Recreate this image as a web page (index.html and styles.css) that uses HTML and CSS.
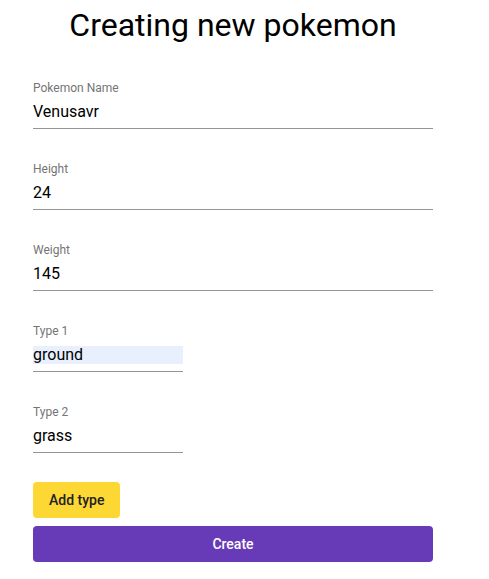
FILE: index.html
```html
<!DOCTYPE html>
<html>
<head>
<meta charset="utf-8">
<link rel="stylesheet" href="styles.css">
</head>
<body>
<div class="page">
  <h1 class="title">Creating new pokemon</h1>
  <form class="form">
    <div class="field">
      <label class="label">Pokemon Name</label>
      <div class="control"><input class="input" value="Venusavr"></div>
    </div>
    <div class="field">
      <label class="label">Height</label>
      <div class="control"><input class="input" value="24"></div>
    </div>
    <div class="field">
      <label class="label">Weight</label>
      <div class="control"><input class="input" value="145"></div>
    </div>
    <div class="field field-short">
      <label class="label">Type 1</label>
      <div class="control"><input class="input input-autofill" value="ground"></div>
    </div>
    <div class="field field-short">
      <label class="label">Type 2</label>
      <div class="control"><input class="input" value="grass"></div>
    </div>
    <div class="actions">
      <button type="button" class="btn btn-add">Add type</button>
      <button type="button" class="btn btn-create">Create</button>
    </div>
  </form>
</div>
</body>
</html>
```
FILE: styles.css
```css
html, body {
  margin: 0;
  padding: 0;
  background: #ffffff;
}
body {
  font-family: Roboto, "Noto Sans", sans-serif;
  color: #000;
}
.page {
  width: 400px;
  padding-left: 33px;
}
.title {
  margin: 0;
  padding-top: 7px;
  font-size: 32px;
  font-weight: 400;
  line-height: 37.5px;
  text-align: center;
  color: #000;
}
.form {
  display: flex;
  flex-direction: column;
  padding-top: 36px;
}
.field {
  display: flex;
  flex-direction: column;
  margin-bottom: 33px;
}
.field-short {
  width: 150px;
}
.label {
  font-size: 12px;
  line-height: 14px;
  color: #757575;
  margin-bottom: 8px;
}
.control {
  border-bottom: 1px solid #949494;
  padding-bottom: 7px;
}
.input {
  display: block;
  width: 100%;
  box-sizing: border-box;
  height: 18px;
  margin: 0;
  padding: 0;
  border: none;
  outline: none;
  background: transparent;
  font-family: Roboto, "Noto Sans", sans-serif;
  font-size: 16px;
  line-height: 18px;
  color: #000;
}
.input-autofill {
  background: #e8f0fe;
}
.actions {
  display: flex;
  flex-direction: column;
  align-items: flex-start;
  gap: 8px;
  margin-top: -4px;
}
.btn {
  border: none;
  border-radius: 4px;
  height: 36px;
  padding: 0 16px;
  font-family: Roboto, "Noto Sans", sans-serif;
  font-size: 14px;
  font-weight: 500;
  cursor: pointer;
}
.btn-add {
  background: #fdd835;
  color: #212121;
}
.btn-create {
  align-self: stretch;
  background: #673ab7;
  color: #ffffff;
}
```
